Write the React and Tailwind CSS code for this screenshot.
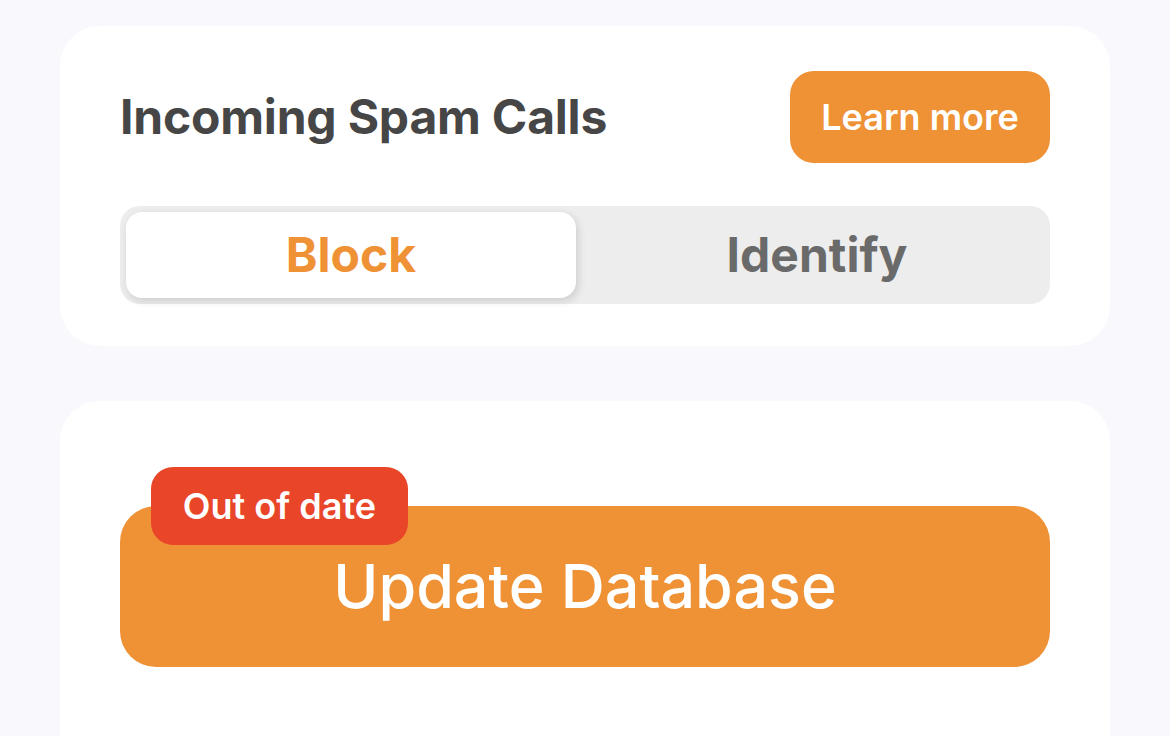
export default function App() {
  return (
    <div
      className="w-[1170px] h-[736px] overflow-hidden bg-[#f8f8fd] px-[60px] pt-[26px]"
      style={{ fontFamily: "Inter, 'Noto Sans', sans-serif" }}
    >
      <div className="bg-white rounded-[40px] px-[60px] pt-[45px] pb-[42px]">
        <div className="flex items-center justify-between">
          <h1 className="text-[48px] font-bold text-[#464646] tracking-[-0.2px]">Incoming Spam Calls</h1>
          <button className="h-[92px] w-[260px] rounded-[24px] bg-[#ef9135] text-white text-[36px] font-semibold">
            Learn more
          </button>
        </div>
        <div className="mt-[43px] h-[98px] rounded-[20px] bg-[#ededed] p-[6px] flex">
          <div className="w-[450px] rounded-[16px] bg-white shadow-[2px_3px_8px_rgba(0,0,0,0.14)] flex items-center justify-center text-[48px] font-bold text-[#ef9135]">
            Block
          </div>
          <div className="flex-1 pl-[14px] flex items-center justify-center text-[48px] font-bold text-[#6a6a6a]">
            Identify
          </div>
        </div>
      </div>
      <div className="mt-[55px] bg-white rounded-t-[40px] h-[400px] px-[60px] pt-[66px]">
        <div className="relative pt-[39px]">
          <button className="w-full h-[161px] rounded-[36px] bg-[#ef9135] text-white text-[61px] font-medium">
            Update Database
          </button>
          <div className="absolute left-[31px] top-0 h-[78px] w-[257px] rounded-[22px] bg-[#e94528] text-white text-[36px] font-semibold flex items-center justify-center">
            Out of date
          </div>
        </div>
      </div>
    </div>
  );
}
